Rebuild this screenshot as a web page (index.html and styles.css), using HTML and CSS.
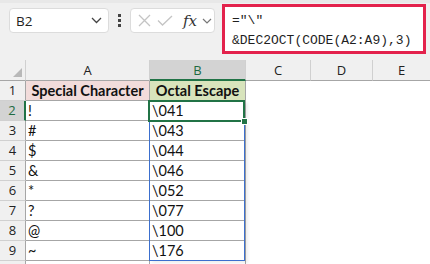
FILE: index.html
```html
<!DOCTYPE html>
<html lang="en">
<head>
  <meta charset="UTF-8">
  <title>Octal Escape</title>
  <link rel="stylesheet" href="styles.css">
</head>
<body>
  <div class="toolbar">
    <div class="namebox">
      <span>B2</span>
      <svg class="chev" width="11" height="7" viewBox="0 0 11 7"><path d="M1 1 L5.5 5.5 L10 1" fill="none" stroke="#444" stroke-width="1.3"/></svg>
    </div>
    <div class="grip"><i></i><i></i><i></i></div>
    <div class="fxbox">
      <svg width="13" height="13" viewBox="0 0 13 13"><path d="M1 1 L12 12 M12 1 L1 12" stroke="#c4c4c4" stroke-width="1.3"/></svg>
      <svg width="16" height="11" viewBox="0 0 16 11"><path d="M1 5.5 L5.5 10 L15 1" fill="none" stroke="#c4c4c4" stroke-width="1.3"/></svg>
      <span class="fx">fx</span>
      <svg width="10" height="6" viewBox="0 0 10 6"><path d="M1 1 L5 5 L9 1" fill="none" stroke="#777" stroke-width="1.2"/></svg>
    </div>
    <div class="formula">="\"<br>&amp;DEC2OCT(CODE(A2:A9),3)</div>
  </div>

  <div class="sheet">
    <div class="corner"><span class="tri"></span></div>
    <div class="colhead">A</div>
    <div class="colhead active">B</div>
    <div class="colhead">C</div>
    <div class="colhead">D</div>
    <div class="colhead last">E</div>

    <div class="rowhead">1</div>
    <div class="cell title red">Special Character</div>
    <div class="cell title green">Octal Escape</div>
    <div class="empty"></div><div class="empty"></div><div class="empty"></div>

    <div class="rowhead active">2</div>
    <div class="cell">!</div>
    <div class="cell selected">\041
      <div class="spill"></div>
      <div class="cursor"><span class="handle"></span></div>
    </div>
    <div class="empty"></div><div class="empty"></div><div class="empty"></div>

    <div class="rowhead">3</div>
    <div class="cell">#</div>
    <div class="cell">\043</div>
    <div class="empty"></div><div class="empty"></div><div class="empty"></div>

    <div class="rowhead">4</div>
    <div class="cell">$</div>
    <div class="cell">\044</div>
    <div class="empty"></div><div class="empty"></div><div class="empty"></div>

    <div class="rowhead">5</div>
    <div class="cell">&amp;</div>
    <div class="cell">\046</div>
    <div class="empty"></div><div class="empty"></div><div class="empty"></div>

    <div class="rowhead">6</div>
    <div class="cell">*</div>
    <div class="cell">\052</div>
    <div class="empty"></div><div class="empty"></div><div class="empty"></div>

    <div class="rowhead">7</div>
    <div class="cell">?</div>
    <div class="cell">\077</div>
    <div class="empty"></div><div class="empty"></div><div class="empty"></div>

    <div class="rowhead">8</div>
    <div class="cell">@</div>
    <div class="cell">\100</div>
    <div class="empty"></div><div class="empty"></div><div class="empty"></div>

    <div class="rowhead">9</div>
    <div class="cell">~</div>
    <div class="cell">\176</div>
    <div class="empty"></div><div class="empty"></div><div class="empty"></div>

    <div class="rowhead"></div>
    <div class="cell"></div>
    <div class="cell"></div>
    <div class="empty"></div><div class="empty"></div><div class="empty"></div>
  </div>
</body>
</html>
```

FILE: styles.css
```css
* {
  box-sizing: border-box;
}

body {
  margin: 0;
  width: 430px;
  height: 264px;
  overflow: hidden;
  background: #ffffff;
  font-family: Lato, "Liberation Sans", sans-serif;
}

.toolbar {
  height: 60px;
  background: #f0f0f0;
  border-top: 3px solid #e8e8e8;
  display: flex;
  align-items: flex-start;
  padding-left: 9px;
}

.namebox {
  margin-top: 5px;
  width: 100px;
  height: 25px;
  background: #fff;
  border: 1px solid #dcdcdc;
  border-radius: 4px;
  display: flex;
  align-items: center;
  justify-content: space-between;
  padding: 0 6px 0 6px;
  font-family: "Open Sans", sans-serif;
  font-size: 13.5px;
  color: #222;
}

.grip {
  width: 21px;
  height: 25px;
  margin-top: 5px;
  display: flex;
  flex-direction: column;
  align-items: center;
  justify-content: center;
  gap: 2px;
}

.grip i {
  width: 3px;
  height: 3px;
  background: #444;
}

.fxbox {
  margin-top: 5px;
  width: 85px;
  height: 25px;
  background: #fff;
  border: 1px solid #dcdcdc;
  border-radius: 4px;
  display: flex;
  align-items: center;
  padding-left: 7px;
  gap: 6px;
}

.fx {
  font-family: "DejaVu Serif", serif;
  font-style: italic;
  font-size: 15px;
  color: #333;
  margin-left: 4px;
  margin-right: -1px;
}

.formula {
  margin-top: 1px;
  margin-left: 7px;
  width: 204px;
  height: 50px;
  background: #fff;
  border: 3px solid #e3224c;
  padding: 4px 0 0 7px;
  font-family: "Liberation Mono", monospace;
  font-size: 13px;
  line-height: 20px;
  color: #1f1f1f;
}

.sheet {
  display: grid;
  grid-template-columns: 26px 124px 96px 65px 62px 1fr;
  grid-template-rows: 21px repeat(10, 20px);
}

.corner {
  background: #f0f0f0;
  border-right: 1px solid #d0d0d0;
  border-bottom: 1px solid #a6a6a6;
  position: relative;
}

.tri {
  position: absolute;
  right: 3px;
  bottom: 3px;
  width: 0;
  height: 0;
  border-left: 9px solid transparent;
  border-bottom: 9px solid #b8b8b8;
}

.colhead {
  background: #f0f0f0;
  border-right: 1px solid #d0d0d0;
  border-bottom: 1px solid #a6a6a6;
  text-align: center;
  font-family: "Open Sans", sans-serif;
  font-size: 13px;
  line-height: 20px;
  color: #222;
}

.colhead.active {
  background: #d3d3d3;
  color: #1e6b41;
  border-bottom: 2px solid #217346;
}

.colhead.last {
  border-right: none;
}

.rowhead {
  background: #f0f0f0;
  border-right: 1px solid #a6a6a6;
  border-bottom: 1px solid #d0d0d0;
  text-align: center;
  font-family: "Open Sans", sans-serif;
  font-size: 13px;
  line-height: 19px;
  color: #222;
}

.rowhead.active {
  background: #d3d3d3;
  color: #1e6b41;
  border-right: 2px solid #217346;
}

.cell {
  border-right: 1px solid #a6a6a6;
  border-bottom: 1px solid #a6a6a6;
  padding-left: 2px;
  font-size: 14.5px;
  line-height: 19px;
  color: #111;
}

.cell.title {
  font-weight: bold;
  text-align: center;
  padding-left: 0;
}

.cell.red {
  background: #f2dcdb;
}

.cell.green {
  background: #d8e4bc;
}

.selected {
  position: relative;
}

.spill {
  position: absolute;
  left: -1px;
  top: 0;
  width: 96px;
  height: 160px;
  border: 1px solid #3b6fce;
  box-shadow: 3px 2px 3px rgba(0, 0, 0, 0.07);
}

.cursor {
  position: absolute;
  left: -2px;
  top: -1px;
  width: 97px;
  height: 22px;
  border: 2px solid #217346;
}

.handle {
  position: absolute;
  right: -5px;
  bottom: -5px;
  width: 7px;
  height: 7px;
  background: #217346;
  border: 1px solid #fff;
}
```
